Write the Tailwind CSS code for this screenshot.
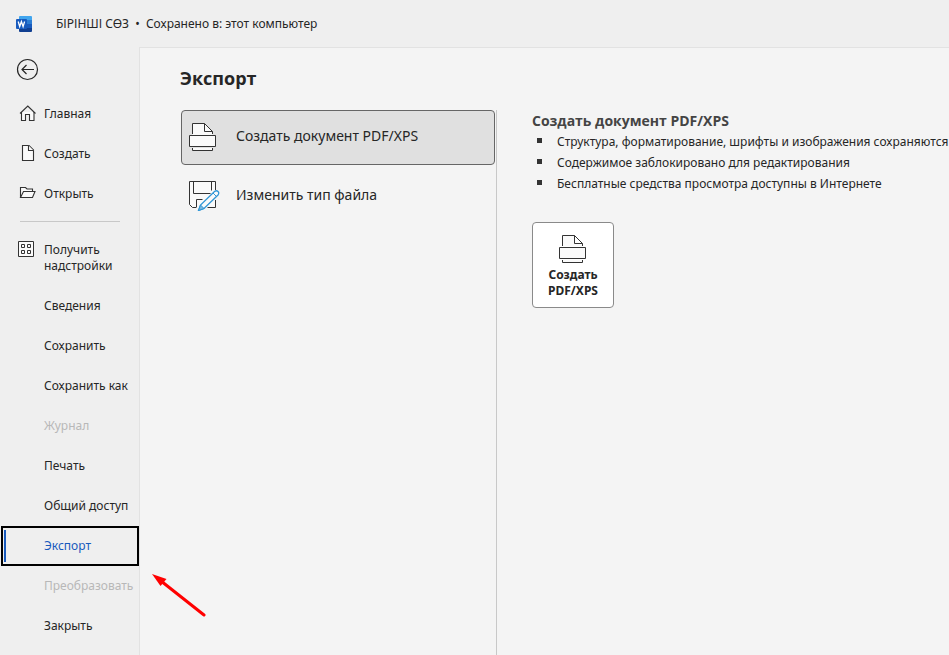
<!DOCTYPE html>
<html lang="ru">
<head>
  <meta charset="UTF-8">
  <meta name="viewport" content="width=device-width, initial-scale=1.0">
  <title>Экспорт</title>
  <script src="https://cdn.jsdelivr.net/npm/@tailwindcss/browser@4"></script>
</head>

<body class="bg-[#efefef] text-[#262626] font-['Noto_Sans','Open_Sans',sans-serif] text-xs">
  <div class="min-h-screen flex flex-col">

    <header class="h-[47px] shrink-0 flex items-center gap-6 pl-4 pt-px">
      <svg class="w-4 h-4" viewBox="0 0 16 16">
        <path d="M4 0h11a1 1 0 0 1 1 1v3H3V1a1 1 0 0 1 1-1z" fill="#41a5ee"/>
        <path d="M3 4h13v4H3z" fill="#2b7cd3"/>
        <path d="M3 8h13v4H3z" fill="#185abd"/>
        <path d="M3 12h13v3a1 1 0 0 1-1 1H4a1 1 0 0 1-1-1z" fill="#103f91"/>
        <rect x="0" y="3" width="11" height="10" rx="1" fill="#185abd"/>
        <path d="M2.200 5.500l1.500 5 1.700-5 1.700 5 1.500-5" fill="none" stroke="#fff" stroke-width="1.300"/>
      </svg>
      <p>БІРІНШІ СӨЗ&nbsp; •&nbsp; Сохранено в: этот компьютер</p>
    </header>

    <div class="flex-1 flex">
      <aside class="w-[139px] shrink-0">
        <div class="h-[47px] pl-4 pt-[11px]">
          <button type="button" aria-label="Назад" class="block">
            <svg class="w-6 h-6" viewBox="0 0 24 24" fill="none" stroke="#262626" stroke-width="1.200">
              <circle cx="11.500" cy="11.500" r="10"/>
              <path d="M18 11.500H6M10.500 7L6 11.500l4.500 4.500"/>
            </svg>
          </button>
        </div>

        <nav class="leading-4">
          <a href="#home" class="h-10 flex items-center gap-1.5 pl-[18px]">
            <svg class="w-5 h-5" viewBox="0 0 20 20" fill="none" stroke="#333" stroke-width="1.100">
              <path d="M3.500 8v8.500h4v-6h4v6h4.500V8" fill="#fafafa"/>
              <path d="M2 9.500L9.800 2l7.700 7.500"/>
            </svg>
            Главная
          </a>
          <a href="#new" class="h-10 flex items-center gap-1.5 pl-[18px]">
            <svg class="w-5 h-5" viewBox="0 0 20 20" fill="#fafafa" stroke="#333" stroke-width="1.100">
              <path d="M4.500 1.500h6.500l4.500 4.500v10.500h-11z"/>
              <path d="M10.500 1.500v5h5"/>
            </svg>
            Создать
          </a>
          <a href="#open" class="h-10 flex items-center gap-1.5 pl-[18px]">
            <svg class="w-5 h-5" viewBox="0 0 20 20" fill="#fafafa" stroke="#333" stroke-width="1.100">
              <path d="M2.500 13.500v-10h5l1.500 1.500h5.500v2.500"/>
              <path d="M2.500 13.500l3-6h11.500l-2.500 6z"/>
            </svg>
            Открыть
          </a>

          <hr class="mt-[7px] mb-2 ml-5 mr-[19px] border-[#c8c8c8]">

          <a href="#addins" class="h-14 flex items-center gap-1.5 pl-[18px]">
            <svg class="w-5 h-5 shrink-0 self-start mt-2.5" viewBox="0 0 20 20" fill="#fafafa" stroke="#333" stroke-width="1">
              <path d="M.5 1.500h15v15H.5z"/>
              <path d="M3.500 4.500h3v3h-3zM9.500 4.500h3v3h-3zM3.500 10.500h3v3h-3zM9.500 10.500h3v3h-3z"/>
            </svg>
            Получить<br>надстройки
          </a>
          <a href="#info" class="h-10 flex items-center pl-11">Сведения</a>
          <a href="#save" class="h-10 flex items-center pl-11">Сохранить</a>
          <a href="#save-as" class="h-10 flex items-center pl-11">Сохранить как</a>
          <a href="#history" aria-disabled="true" class="h-10 flex items-center pl-11 text-[#b8b8b8]">Журнал</a>
          <a href="#print" class="h-10 flex items-center pl-11">Печать</a>
          <a href="#share" class="h-10 flex items-center pl-11">Общий доступ</a>
          <a href="#export" aria-current="page" class="h-10 ml-px flex items-center border-2 border-black pl-px text-[#185abd]">
            <span class="w-0.5 h-8 bg-[#185abd]"></span>
            <span class="pl-[38px]">Экспорт</span>
          </a>
          <a href="#transform" aria-disabled="true" class="h-10 flex items-center pl-11 text-[#b8b8b8]">Преобразовать</a>
          <a href="#close" class="h-10 flex items-center pl-11">Закрыть</a>
        </nav>
      </aside>

      <main class="relative flex-1 flex flex-col bg-[#f4f4f4] border-l border-t border-[#e2e2e2] pl-10">
        <h1 class="h-[62px] pt-4 font-['Open_Sans','Noto_Sans',sans-serif] text-lg leading-7 font-bold">Экспорт</h1>

        <div class="flex-1 flex">
          <div class="w-[317px] shrink-0 border-r border-[#c8c8c8] pl-px text-sm">
            <button type="button" class="w-[314px] h-[55px] flex items-center gap-4 pl-1.5 pb-[3px] border border-[#666] rounded bg-[#e0e0e0]">
              <svg class="w-8 h-8" viewBox="0 -1 32 32" fill="#fafafa" stroke="#333" stroke-width="1">
                <path d="M4.500 14.500v-12h12l8 8v4z" stroke="none"/>
                <path d="M4.500 13v-10.500h12l8 8v2.500M16.500 2.500v8h8"/>
                <path d="M1.500 14.500h26v11h-26z"/>
                <path d="M4.500 27v2.500h20v-2.500"/>
              </svg>
              Создать документ PDF/XPS
            </button>
            <button type="button" class="w-[314px] h-[55px] mt-1 flex items-center gap-4 pl-[7px] pb-[3px]">
              <svg class="w-8 h-8" viewBox="0 0 32 32" fill="none" stroke="#333" stroke-width="1">
                <path d="M1.500 2.500h26v26h-23l-3-3z" fill="#fafafa" stroke="none"/>
                <path d="M27.500 11v-8.500h-26v23l3 3h4M27.500 21v7.500h-8M5.500 2.500v12h17M23.500 2.500v9M8.500 28v-7.500h6"/>
                <path d="M10.500 31.500l2-5.500 14-13.500q2-1.500 3.500 0t0 3.500l-14 13.500z" fill="#fafafa" stroke="#2f96d6" stroke-width="1.300"/>
                <path d="M10.500 31.500l2-5.500 3.500 3.500z" fill="#7db9e2" stroke="#2f96d6"/>
                <path d="M25 14l3.500 3.500" stroke="#2f96d6"/>
              </svg>
              Изменить тип файла
            </button>
          </div>

          <section class="flex-1 pl-[35px] pt-px">
            <h2 class="font-['Open_Sans','Noto_Sans',sans-serif] text-sm leading-5 font-bold text-[#444]">Создать документ PDF/XPS</h2>
            <ul class="leading-[21px] whitespace-nowrap">
              <li class="flex"><span class="w-[5px] h-[5px] mt-[7px] ml-[5px] mr-[15px] bg-[#333]"></span>Структура, форматирование, шрифты и изображения сохраняются</li>
              <li class="flex"><span class="w-[5px] h-[5px] mt-[7px] ml-[5px] mr-[15px] bg-[#333]"></span>Содержимое заблокировано для редактирования</li>
              <li class="flex"><span class="w-[5px] h-[5px] mt-[7px] ml-[5px] mr-[15px] bg-[#333]"></span>Бесплатные средства просмотра доступны в Интернете</li>
            </ul>
            <button type="button" class="mt-7 w-[82px] h-[86px] pt-0.5 flex flex-col items-center justify-center border border-[#8a8a8a] rounded bg-white font-bold leading-4">
              <svg class="w-8 h-8 mb-0.5" viewBox="0 0 32 32" fill="#fafafa" stroke="#333" stroke-width="1">
                <path d="M5.500 13v-10.500h12l8 8v2.500M17.500 2.500v8h8"/>
                <path d="M2.500 14.500h26v11h-26z"/>
                <path d="M5.500 27v2.500h20v-2.500"/>
              </svg>
              Создать<br>PDF/XPS
            </button>
          </section>
        </div>

        <!-- pointer to the selected menu entry -->
        <svg class="absolute left-3 top-[526px] w-[54px] h-[44px]" viewBox="0 0 54 44">
          <path d="M9 7l43 34" stroke="#f00" stroke-width="3" stroke-linecap="round"/>
          <path d="M0 0l14.500 5-6 7z" fill="#f00"/>
        </svg>
      </main>
    </div>
  </div>
</body>
</html>
